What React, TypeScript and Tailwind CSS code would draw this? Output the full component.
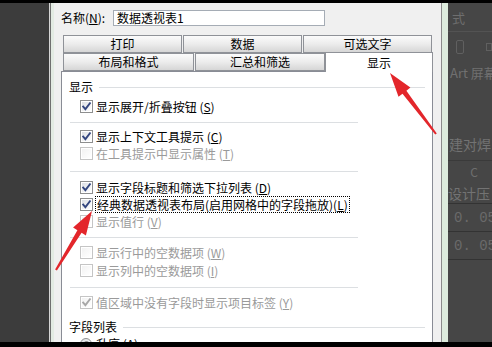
import React from "react";

type CbProps = { checked?: boolean; disabled?: boolean };

function Checkbox({ checked, disabled }: CbProps) {
  return (
    <svg width="13" height="13" viewBox="0 0 13 13" className="shrink-0">
      <defs>
        <linearGradient id={disabled ? "cbd" : "cbn"} x1="0" y1="0" x2="1" y2="1">
          <stop offset="0" stopColor={disabled ? "#f2f2f2" : "#dcdfe4"} />
          <stop offset="1" stopColor="#ffffff" />
        </linearGradient>
      </defs>
      <rect x="0.5" y="0.5" width="12" height="12" fill="#fff" stroke={disabled ? "#c5c5c5" : "#8e8f8f"} />
      <rect x="2" y="2" width="9" height="9" fill={`url(#${disabled ? "cbd" : "cbn"})`} />
      {checked && (
        <path
          d="M3.2 6.6 L5.4 9.2 L9.9 3.3"
          fill="none"
          stroke={disabled ? "#a8a8a8" : "#33467f"}
          strokeWidth="1.9"
          strokeLinecap="square"
        />
      )}
    </svg>
  );
}

function Label({ pre, k, post = ")" }: { pre: string; k: string; post?: string }) {
  return (
    <>
      {pre}
      <span className="underline underline-offset-1">{k}</span>
      {post}
    </>
  );
}

function Row({
  checked,
  disabled,
  children,
  focus,
  className = "",
}: {
  checked?: boolean;
  disabled?: boolean;
  children: React.ReactNode;
  focus?: boolean;
  className?: string;
}) {
  return (
    <div className={`flex items-center h-[17px] pl-[18px] ${className}`}>
      <Checkbox checked={checked} disabled={disabled} />
      {focus ? (
        <span className="ml-[2px] border border-dotted border-black px-[1px] leading-[15px] whitespace-nowrap text-black">
          {children}
        </span>
      ) : (
        <span className={`ml-[3px] leading-[15px] whitespace-nowrap ${disabled ? "text-[#9a9a9a]" : "text-black"}`}>
          {children}
        </span>
      )}
    </div>
  );
}

function Sep({ className = "" }: { className?: string }) {
  return <div className={`h-px w-[288px] ml-[8px] bg-[#dcdfe2] ${className}`} />;
}

function Tab({ label, w, className = "" }: { label: string; w: string; className?: string }) {
  return (
    <div
      className={`${w} h-[18px] flex items-center justify-center border border-[#8f9298] bg-linear-to-b from-[#fbfbfb] via-[#ececec] to-[#d6d6d6] text-black leading-none ${className}`}
    >
      {label}
    </div>
  );
}

function arrowPoints(
  tx: number,
  ty: number,
  hx: number,
  hy: number,
  headLen: number,
  headW: number,
  st: number,
  sh: number
) {
  const dx = hx - tx;
  const dy = hy - ty;
  const L = Math.hypot(dx, dy);
  const ux = dx / L;
  const uy = dy / L;
  const px = -uy;
  const py = ux;
  const bx = hx - ux * headLen;
  const by = hy - uy * headLen;
  const pts = [
    [tx + (px * st) / 2, ty + (py * st) / 2],
    [bx + (px * sh) / 2, by + (py * sh) / 2],
    [bx + (px * headW) / 2, by + (py * headW) / 2],
    [hx, hy],
    [bx - (px * headW) / 2, by - (py * headW) / 2],
    [bx - (px * sh) / 2, by - (py * sh) / 2],
    [tx - (px * st) / 2, ty - (py * st) / 2],
  ];
  return pts.map((p) => `${p[0].toFixed(1)},${p[1].toFixed(1)}`).join(" ");
}

export default function App() {
  return (
    <div className="relative w-[492px] h-[347px] bg-black overflow-hidden font-['Noto_Sans_CJK_SC',sans-serif] text-[12px]">
      <div className="h-[3px]" />
      <div className="flex h-[339px]">
        {/* left background */}
        <div className="w-[49px] bg-[#3c3c3c]" />
        <div className="w-px bg-[#d6d6d6]" />
        <div className="w-px bg-[#707070]" />
        <div className="w-[3px] bg-[#e3ebe3]" />

        {/* dialog */}
        <div className="w-[387px] bg-[#f0f0f0] pl-[7px] pr-[8px] pt-[7px] flex flex-col overflow-hidden">
          <div className="flex items-center h-[16px]">
            <span className="w-[52px] whitespace-nowrap text-black leading-none">
              名称(<span className="underline underline-offset-1">N</span>):
            </span>
            <div className="w-[212px] h-[16px] border border-[#a5acb5] bg-white pl-[3px] flex items-center leading-none text-black">
              数据透视表1
            </div>
          </div>

          <div className="mt-[9px] flex h-[18px] pl-[2px]">
            <Tab label="打印" w="w-[119px]" />
            <Tab label="数据" w="w-[119px]" className="ml-px" />
            <Tab label="可选文字" w="w-[129px]" className="ml-px" />
          </div>
          <div className="flex h-[18px] pl-[2px] items-start">
            <Tab label="布局和格式" w="w-[131px]" />
            <Tab label="汇总和筛选" w="w-[130px]" className="ml-px" />
            <div className="relative z-10 -mt-px h-[20px] w-[108px] bg-white border-x border-t border-[#8f9298] flex items-center justify-center leading-none text-black">
              显示
            </div>
          </div>

          {/* panel */}
          <div className="w-[372px] h-[300px] shrink-0 border border-[#898c95] bg-white pt-[7px] flex flex-col">
            <div className="flex items-center h-[16px] pl-[7px] pr-[7px]">
              <span className="leading-none text-black">显示</span>
              <div className="flex-1 h-px bg-[#dcdfe2] ml-[6px]" />
            </div>
            <Row checked className="mt-[3px]">
              <Label pre="显示展开/折叠按钮 (" k="S" />
            </Row>
            <Sep className="mt-[7px]" />
            <Row checked className="mt-[5px]">
              <Label pre="显示上下文工具提示 (" k="C" />
            </Row>
            <Row disabled>
              <Label pre="在工具提示中显示属性 (" k="T" />
            </Row>
            <Sep className="mt-[9px]" />
            <Row checked className="mt-[7px]">
              <Label pre="显示字段标题和筛选下拉列表 (" k="D" />
            </Row>
            <Row checked focus>
              <Label pre="经典数据透视表布局(启用网格中的字段拖放)(" k="L" />
            </Row>
            <Row disabled>
              <Label pre="显示值行 (" k="V" />
            </Row>
            <Sep className="mt-[7px]" />
            <Row disabled className="mt-[6px]">
              <Label pre="显示行中的空数据项 (" k="W" />
            </Row>
            <Row disabled className="mt-px">
              <Label pre="显示列中的空数据项 (" k="I" />
            </Row>
            <Sep className="mt-[8px]" />
            <Row disabled checked className="mt-[6px]">
              <Label pre="值区域中没有字段时显示项目标签 (" k="Y" />
            </Row>
            <div className="mt-[8px] flex items-center h-[16px] pl-[7px] pr-[7px]">
              <span className="leading-none text-black">字段列表</span>
              <div className="flex-1 h-px bg-[#dcdfe2] ml-[6px]" />
            </div>
            <div className="flex items-center h-[17px] pl-[18px]">
              <div className="w-[12px] h-[12px] rounded-full border border-[#8e8f8f] bg-linear-to-br from-[#dcdfe4] to-white flex items-center justify-center">
                <div className="w-[5px] h-[5px] rounded-full bg-[#8a8a8a]" />
              </div>
              <span className="ml-[4px] leading-none text-black">
                升序 (<span className="underline">A</span>)
              </span>
            </div>
          </div>
        </div>

        {/* right edge */}
        <div className="w-px bg-[#8a8a8a]" />
        <div className="w-[6px] bg-[#dcebdc]" />

        {/* right background (dimmed sheet) */}
        <div className="w-[44px] bg-[#464646] flex flex-col text-[#6e6e6e] overflow-hidden whitespace-nowrap">
          <div className="h-[28px] pl-[4px] flex items-center text-[13px] leading-none">式</div>
          <div className="h-px bg-[#535353]" />
          <div className="h-[30px] pl-[8px] flex items-center">
            <div className="w-[10px] h-[14px] border border-[#606060] rounded-[2px]" />
            <div className="ml-[22px] w-[8px] h-[8px] border border-[#606060]" />
          </div>
          <div className="h-[20px] pl-[2px] flex items-center text-[13px] leading-none text-[#707070]">Art 屏幕</div>
          <div className="h-[52px]" />
          <div className="h-[20px] pl-[1px] flex items-center text-[14px] leading-none text-[#737373]">建对焊</div>
          <div className="h-px bg-[#3a3a3a] mt-[6px]" />
          <div className="h-[22px] flex items-center justify-center pl-[8px] text-[12px] leading-none">C</div>
          <div className="h-[20px] flex items-center text-[14px] leading-none text-[#737373]">设计压</div>
          <div className="h-px bg-[#333]" />
          <div className="h-[27px] pl-[6px] flex items-center text-[14px] leading-none font-['Liberation_Mono',monospace] text-[#6a6a6a]">0. 05</div>
          <div className="h-px bg-[#333]" />
          <div className="h-[27px] pl-[6px] flex items-center text-[14px] leading-none font-['Liberation_Mono',monospace] text-[#6a6a6a]">0. 05</div>
          <div className="h-px bg-[#333]" />
        </div>
      </div>

      {/* red arrows */}
      <svg className="absolute left-0 top-0 pointer-events-none" width="492" height="347" viewBox="0 0 492 347">
        <polygon points={arrowPoints(436, 134, 390, 73, 24, 15, 2, 5)} fill="#e3262b" />
        <polygon points={arrowPoints(56, 270, 92, 211, 24, 15, 2, 5)} fill="#e3262b" />
      </svg>
    </div>
  );
}
